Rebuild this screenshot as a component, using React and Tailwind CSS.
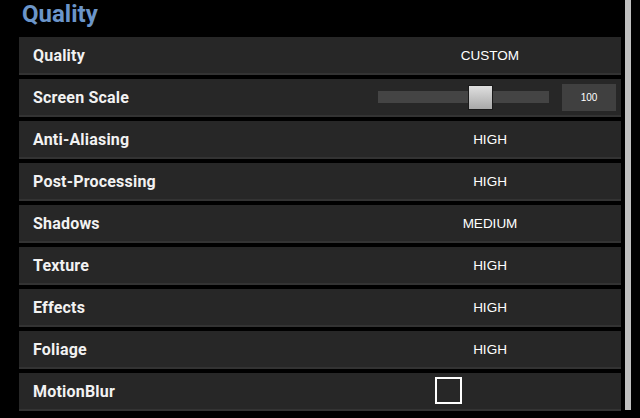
const rows = [
  { label: 'Quality', value: 'CUSTOM' },
  { label: 'Screen Scale', type: 'slider' },
  { label: 'Anti-Aliasing', value: 'HIGH' },
  { label: 'Post-Processing', value: 'HIGH' },
  { label: 'Shadows', value: 'MEDIUM' },
  { label: 'Texture', value: 'HIGH' },
  { label: 'Effects', value: 'HIGH' },
  { label: 'Foliage', value: 'HIGH' },
  { label: 'MotionBlur', type: 'checkbox' },
]

const Row = ({ row }) => {
  return (
    <div className="h-[38px] flex items-center bg-[#272727] border-b-2 border-[#333333] relative">
      <span className="pl-[14px] pt-[1px] text-[16px] tracking-[0.2px] font-bold text-[#f2f2f2] font-['Roboto',sans-serif]">{row.label}</span>
      {row.value && (
        <span className="absolute left-[471px] -translate-x-1/2 top-[9px] text-[13.5px] text-white font-['Liberation_Sans',sans-serif]">
          {row.value}
        </span>
      )}
      {row.type === 'slider' && (
        <div className="ml-auto flex items-center pr-[5px]">
          <div className="relative w-[171px] h-[12px] bg-[#444444]">
            <div className="absolute left-[90px] -top-[6px] w-[25px] h-[25px] bg-gradient-to-b from-[#e0e0e0] to-[#a8a8a8] border border-[#1a1a1a]" />
          </div>
          <div className="ml-[13px] w-[54px] h-[27px] bg-[#404040] flex items-center justify-center text-[10px] text-white font-['Liberation_Sans',sans-serif]">
            100
          </div>
        </div>
      )}
      {row.type === 'checkbox' && (
        <div className="absolute left-[416px] top-[4px] w-[27px] h-[27px] border-2 border-white" />
      )}
    </div>
  )
}

const App = () => {
  return (
    <div className="w-[640px] h-[418px] bg-black overflow-hidden flex">
      <div className="flex flex-col w-[621px]">
        <h1 className="pl-[22px] h-[37px] text-[24px] leading-[28px] font-bold text-[#6b95c9] font-['Roboto',sans-serif]">Quality</h1>
        <div className="pl-[19px] flex flex-col gap-[4px]">
          {rows.map((row) => (
            <Row key={row.label} row={row} />
          ))}
        </div>
      </div>
      <div className="ml-[4px] w-[6px] h-[410px] bg-[#c0c0c0]" />
    </div>
  )
}

export default App
